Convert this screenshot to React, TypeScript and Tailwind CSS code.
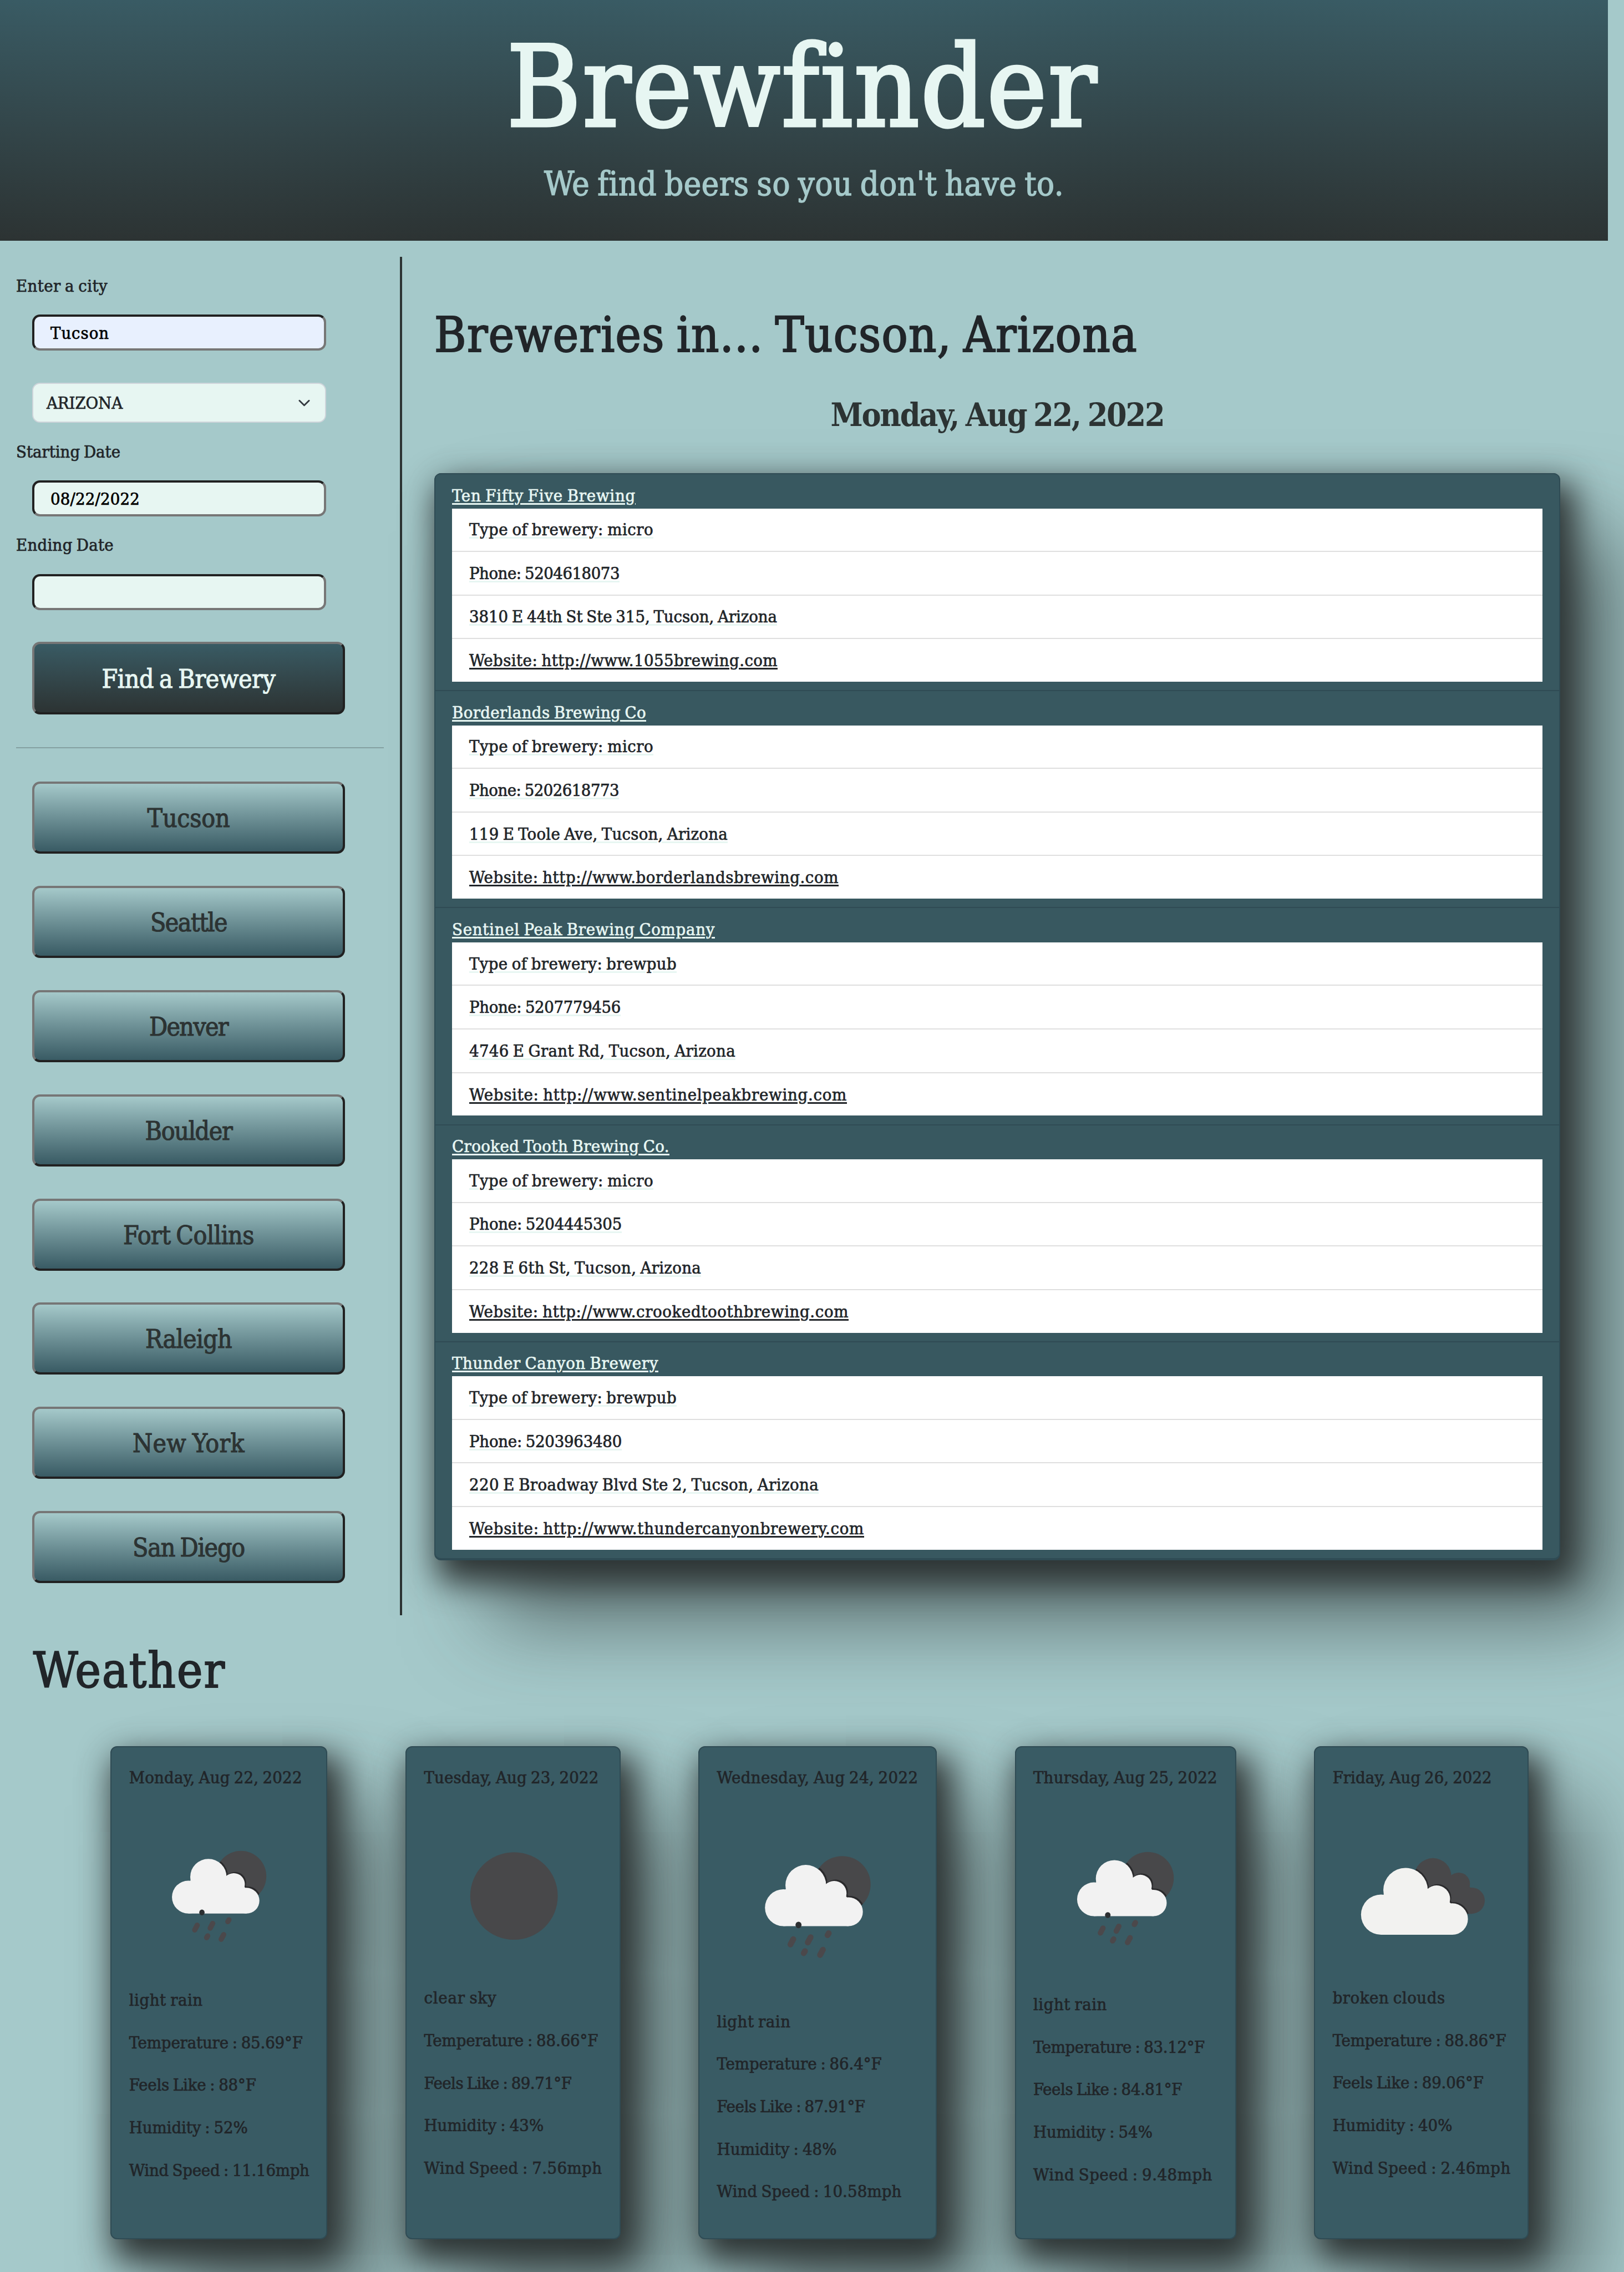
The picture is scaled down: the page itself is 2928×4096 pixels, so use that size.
import { useLayoutEffect, useRef, useState } from "react";
import type { ReactNode } from "react";

/** One line of text, tracked so that it occupies exactly `w` pixels. */
function Fit({ w, className = "", children }: { w: number; className?: string; children: string }) {
  const ref = useRef<HTMLSpanElement>(null);
  const [spacing, setSpacing] = useState(0);
  useLayoutEffect(() => {
    const el = ref.current;
    if (!el) return;
    const previous = el.style.letterSpacing;
    el.style.letterSpacing = "0px";
    const natural = el.getBoundingClientRect().width;
    el.style.letterSpacing = previous;
    setSpacing((w - natural) / children.length);
  }, [w, children]);
  return (
    <span
      ref={ref}
      className={`whitespace-nowrap [-webkit-text-stroke:0.024em] [word-spacing:-0.06em] ${className}`}
      style={{ letterSpacing: `${spacing}px` }}
    >
      {children}
    </span>
  );
}

type Line = [text: string, width: number];

const cities: Line[] = [
  ["Tucson", 149],
  ["Seattle", 138],
  ["Denver", 142],
  ["Boulder", 157],
  ["Fort Collins", 236],
  ["Raleigh", 156],
  ["New York", 202],
  ["San Diego", 202],
];

const breweries: { name: Line; rows: Line[] }[] = [
  {
    name: ["Ten Fifty Five Brewing", 331],
    rows: [
      ["Type of brewery: micro", 332],
      ["Phone: 5204618073", 271],
      ["3810 E 44th St Ste 315, Tucson, Arizona", 555],
      ["Website: http://www.1055brewing.com", 556],
    ],
  },
  {
    name: ["Borderlands Brewing Co", 350],
    rows: [
      ["Type of brewery: micro", 332],
      ["Phone: 5202618773", 270],
      ["119 E Toole Ave, Tucson, Arizona", 466],
      ["Website: http://www.borderlandsbrewing.com", 666],
    ],
  },
  {
    name: ["Sentinel Peak Brewing Company", 474],
    rows: [
      ["Type of brewery: brewpub", 374],
      ["Phone: 5207779456", 273],
      ["4746 E Grant Rd, Tucson, Arizona", 480],
      ["Website: http://www.sentinelpeakbrewing.com", 681],
    ],
  },
  {
    name: ["Crooked Tooth Brewing Co.", 392],
    rows: [
      ["Type of brewery: micro", 332],
      ["Phone: 5204445305", 275],
      ["228 E 6th St, Tucson, Arizona", 418],
      ["Website: http://www.crookedtoothbrewing.com", 684],
    ],
  },
  {
    name: ["Thunder Canyon Brewery", 372],
    rows: [
      ["Type of brewery: brewpub", 374],
      ["Phone: 5203963480", 275],
      ["220 E Broadway Blvd Ste 2, Tucson, Arizona", 630],
      ["Website: http://www.thundercanyonbrewery.com", 712],
    ],
  },
];

function CloudShape({ fill }: { fill: string }) {
  return (
    <g fill={fill}>
      <circle cx="32.9" cy="49.65" r="9.15" />
      <circle cx="44" cy="38.5" r="10.1" />
      <circle cx="58.1" cy="42.5" r="6.15" />
      <circle cx="65.2" cy="51.65" r="7.15" />
      <path d="M32.9 41 L40 38 L58 38 L65 45 L65.2 58.8 L32.9 58.8 Z" />
    </g>
  );
}

function RainIcon({ id }: { id: string }) {
  return (
    <svg viewBox="0 0 100 100" className="block w-full">
      <clipPath id={id}>
        <circle cx="62.1" cy="38.1" r="14.1" />
      </clipPath>
      <circle cx="62.1" cy="38.1" r="14.1" fill="#48484a" />
      <g clipPath={`url(#${id})`}>
        <g transform="translate(0.7 -0.7)">
          <CloudShape fill="#2a2a2c" />
        </g>
      </g>
      <CloudShape fill="#f2f2f2" />
      <ellipse cx="40.4" cy="58.2" rx="1.5" ry="1.6" fill="#2c2f31" />
      <g stroke="#4b484b" strokeLinecap="round" strokeWidth="2.9">
        <path d="M36.4 67.9 L37.8 65.3" />
        <path d="M45 66.9 L46.4 64.3" />
        <path d="M54.8 63.3 L55.4 62.3" />
        <path d="M43 72.2 L43.6 71.2" />
        <path d="M51.1 73.1 L52.5 70.5" />
      </g>
    </svg>
  );
}

function ClearIcon() {
  return (
    <svg viewBox="0 0 100 100" className="block w-full">
      <circle cx="50.7" cy="49.6" r="24.6" fill="#48484a" />
    </svg>
  );
}

function BrokenCloudsIcon() {
  return (
    <svg viewBox="0 0 100 100" className="block w-full">
      <g transform="translate(11 -0.9) scale(1.03)">
        <CloudShape fill="#48484a" />
      </g>
      <mask id="back-mask">
        <g transform="translate(11 -0.9) scale(1.03)">
          <CloudShape fill="#ffffff" />
        </g>
      </mask>
      <g mask="url(#back-mask)">
        <g transform="translate(-12.9 -2) scale(1.238)">
          <CloudShape fill="#2a2a2c" />
        </g>
      </g>
      <g transform="translate(-13.54 -1.3) scale(1.238)">
        <CloudShape fill="#f2f2f0" />
      </g>
    </svg>
  );
}

const days: { width: string; date: Line; icon: ReactNode; lines: Line[] }[] = [
  {
    width: "w-[391px]",
    date: ["Monday, Aug 22, 2022", 312],
    icon: <RainIcon id="moon-mon" />,
    lines: [
      ["light rain", 133],
      ["Temperature : 85.69°F", 313],
      ["Feels Like : 88°F", 229],
      ["Humidity : 52%", 214],
      ["Wind Speed : 11.16mph", 325],
    ],
  },
  {
    width: "w-[387.5px]",
    date: ["Tuesday, Aug 23, 2022", 315],
    icon: <ClearIcon />,
    lines: [
      ["clear sky", 131],
      ["Temperature : 88.66°F", 314],
      ["Feels Like : 89.71°F", 266],
      ["Humidity : 43%", 216],
      ["Wind Speed : 7.56mph", 321],
    ],
  },
  {
    width: "w-[429.7px]",
    date: ["Wednesday, Aug 24, 2022", 363],
    icon: <RainIcon id="moon-wed" />,
    lines: [
      ["light rain", 133],
      ["Temperature : 86.4°F", 297],
      ["Feels Like : 87.91°F", 267],
      ["Humidity : 48%", 216],
      ["Wind Speed : 10.58mph", 333],
    ],
  },
  {
    width: "w-[399px]",
    date: ["Thursday, Aug 25, 2022", 332],
    icon: <RainIcon id="moon-thu" />,
    lines: [
      ["light rain", 133],
      ["Temperature : 83.12°F", 309],
      ["Feels Like : 84.81°F", 268],
      ["Humidity : 54%", 215],
      ["Wind Speed : 9.48mph", 323],
    ],
  },
  {
    width: "w-[387px]",
    date: ["Friday, Aug 26, 2022", 287],
    icon: <BrokenCloudsIcon />,
    lines: [
      ["broken clouds", 203],
      ["Temperature : 88.86°F", 313],
      ["Feels Like : 89.06°F", 272],
      ["Humidity : 40%", 216],
      ["Wind Speed : 2.46mph", 321],
    ],
  },
];

const field =
  "ml-[29px] flex h-[65px] w-[530px] items-center rounded-[14px] border-4 border-t-[#212121] border-l-[#212121] border-r-[#767676] border-b-[#767676] pl-[29px] pt-[3px] text-black";
const button =
  "ml-[29px] flex w-[564px] items-center justify-center rounded-[14px] border-4 border-t-[#767676] border-l-[#767676] border-r-[#212121] border-b-[#212121] bg-linear-to-b pt-[2px] text-[46px]";
const shadow = "shadow-[15px_28px_60px_11px_#2c3333,100px_105px_153px_0_rgba(44,51,51,0.64)]";

export default function App() {
  return (
    <div className="h-[4096px] w-[2928px] overflow-hidden bg-[#a5c9ca] font-['Roboto_Slab','DejaVu_Serif_Condensed','DejaVu_Serif',serif] text-[30.7px] leading-[46px] text-[#212529]">
      <header className="flex h-[434px] w-[2899px] flex-col items-center bg-linear-to-b from-[#395b64] to-[#2c3333] pt-[37px]">
        <h1 className="-ml-[6px] text-[203px] leading-[240px] text-[#e7f6f2]">
          <Fit w={1062}>Brewfinder</Fit>
        </h1>
        <p className="mt-[20px] text-[59px] leading-[70px] text-[#a5c9ca]">
          <Fit w={936}>We find beers so you don't have to.</Fit>
        </p>
      </header>

      <div className="mt-[29px] flex h-[2449px]">
        <aside className="w-[725px] shrink-0 border-r-4 border-[#2c3333] pt-[29.5px] pl-[29px]">
          <div className="h-[46px]">
            <Fit w={165}>Enter a city</Fit>
          </div>
          <div className={`${field} mt-[28px] bg-[#e8f0fe]`}>
            <Fit w={106}>Tucson</Fit>
          </div>
          <div className="mt-[58px] ml-[29px] flex h-[72px] w-[530px] items-center justify-between rounded-[14px] border-2 border-[#ced4da] bg-[#e7f6f2] pt-[3px] pr-[26px] pl-[24px]">
            <Fit w={137}>ARIZONA</Fit>
            <svg viewBox="0 0 16 16" className="h-[23px] w-[23px] -translate-y-px" fill="none" stroke="#343a40" strokeWidth="2" strokeLinecap="round" strokeLinejoin="round">
              <path d="m2 5 6 6 6-6" />
            </svg>
          </div>
          <div className="mt-[30px] h-[46px]">
            <Fit w={188}>Starting Date</Fit>
          </div>
          <div className={`${field} mt-[28px] bg-[#e7f6f2]`}>
            <Fit w={161}>08/22/2022</Fit>
          </div>
          <div className="mt-[29.5px] h-[46px]">
            <Fit w={176}>Ending Date</Fit>
          </div>
          <div className={`${field} mt-[28.5px] bg-[#e7f6f2]`} />
          <div className={`${button} mt-[57.5px] h-[131px] from-[#395b64] to-[#2c3333] text-[#e7f6f2]`}>
            <Fit w={313}>Find a Brewery</Fit>
          </div>
          <div className="mt-[58.5px] mb-[60.5px] h-[2px] w-[663px] bg-[#84a0a1]" />
          <div className="flex flex-col gap-[57.9px]">
            {cities.map(([name, w]) => (
              <div key={name} className={`${button} h-[130px] from-[#a5c9ca] to-[#395b64] text-[#2c3333]`}>
                <Fit w={w}>{name}</Fit>
              </div>
            ))}
          </div>
        </aside>

        <main className="w-[2088px] pt-[89px] pl-[58px]">
          <h2 className="h-[104px] text-[87px] leading-[104px]">
            <Fit w={1268}>Breweries in... Tucson, Arizona</Fit>
          </h2>
          <h3 className="mt-[57px] h-[69px] text-center text-[58.5px] leading-[69px] font-bold text-[#2c3333]">
            <Fit w={601} className="[-webkit-text-stroke:0]">
              Monday, Aug 22, 2022
            </Fit>
          </h3>
          <ul className={`mt-[71px] h-[1960px] rounded-[12px] border-x-2 border-b-4 border-[#2f4b54] bg-[#385860] ${shadow}`}>
            {breweries.map(({ name, rows }, i) => (
              <li key={name[0]} className={`h-[391.2px] border-t-2 border-[#2f4b54] px-[30px] pt-[15.5px] ${i === 0 ? "rounded-t-[10px]" : ""}`}>
                <div className="h-[46px] text-[#e7f6f2]">
                  <Fit w={name[1]} className="underline decoration-[3px] underline-offset-[3px]">
                    {name[0]}
                  </Fit>
                </div>
                <div className="bg-white">
                  {rows.map(([text, w], r) => (
                    <div
                      key={text}
                      className={`flex items-center pt-px pl-[31px] ${r < 3 ? "h-[78.6px] border-b-2 border-[#dfdfdf]" : "h-[76.7px]"}`}
                    >
                      <Fit
                        w={w}
                        className={`underline decoration-[3px] underline-offset-[3px] ${r < 3 ? "decoration-[#e7f6f2]" : ""}`}
                      >
                        {text}
                      </Fit>
                    </div>
                  ))}
                </div>
              </li>
            ))}
          </ul>
        </main>
      </div>

      <section className="pt-[48px]">
        <h2 className="h-[104px] pl-[60px] text-[87px] leading-[104px]">
          <Fit w={347}>Weather</Fit>
        </h2>
        <div className="mt-[84px] flex gap-[140.7px] pl-[199.4px]">
          {days.map(({ width, date, icon, lines }) => (
            <article key={date[0]} className={`${width} h-[888.5px] shrink-0 rounded-[12px] border-2 border-[#2f4b54] bg-[#395b64] px-[31.3px] pt-[31.5px] ${shadow}`}>
              <div className="mb-[31px] h-[46px]">
                <Fit w={date[1]}>{date[0]}</Fit>
              </div>
              {icon}
              {lines.map(([text, w]) => (
                <div key={text} className="h-[76.7px]">
                  <Fit w={w}>{text}</Fit>
                </div>
              ))}
            </article>
          ))}
        </div>
      </section>
    </div>
  );
}
